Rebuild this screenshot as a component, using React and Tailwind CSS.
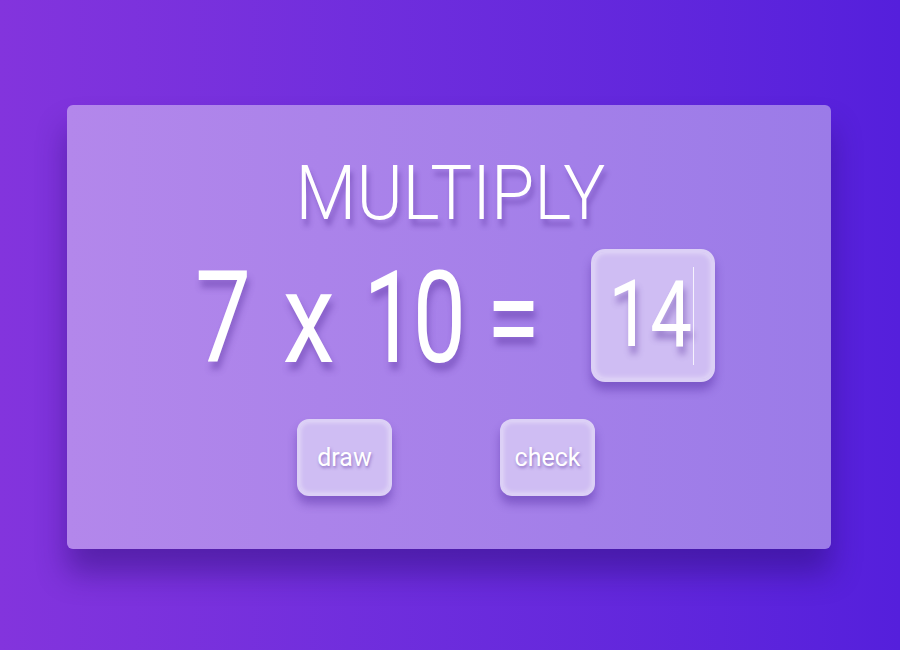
export default function App() {
  return (
    <div className="w-[900px] h-[650px] bg-gradient-to-r from-[#8334dd] to-[#551fdc] flex items-start pt-[105px] pl-[67px] font-['Roboto','Liberation_Sans',sans-serif]">
      <div className="w-[764px] h-[444px] rounded-[6px] bg-gradient-to-r from-[#b387eb] to-[#9b7be8] shadow-[0_24px_30px_rgba(40,10,110,0.45)] flex flex-col items-center">
        <div className="mt-[53px] ml-[2px] h-[70px] flex items-center text-white text-[76px] font-light leading-none [text-shadow:3px_7px_6px_rgba(90,50,160,0.45)]">
          <span className="inline-block scale-x-[0.925]">MULTIPLY</span>
        </div>
        <div className="mt-[21px] ml-[16px] h-[133px] flex items-center gap-[37px] text-white text-[128px] font-normal leading-none [text-shadow:3px_8px_7px_rgba(90,50,160,0.45)]">
          <span className="inline-flex justify-center w-[47px] pt-[4px]"><span className="inline-block scale-x-[0.78]">7</span></span>
          <span className="inline-flex justify-center w-[50px] pt-[4px]"><span className="inline-block scale-x-[0.82]">x</span></span>
          <span className="inline-flex justify-center w-[85px] pt-[4px]"><span className="inline-block scale-x-[0.74] tracking-[-0.04em]">10</span></span>
          <span className="inline-flex justify-center w-[42px] pt-[4px]"><span className="inline-block scale-x-[0.76]">=</span></span>
          <div className="ml-[19px] w-[124px] h-[133px] rounded-[14px] bg-[#cfbdf3] border-[3px] border-[#dcd0f6] shadow-[0_8px_10px_rgba(70,30,150,0.4),inset_0_0_6px_rgba(255,255,255,0.6)] flex items-center relative">
            <span className="absolute left-[20px] top-[26px] w-[74px] h-[72px] inline-flex justify-center items-center text-[93px]">
              <span className="inline-block scale-x-[0.8]">14</span>
            </span>
            <div className="absolute left-[99px] top-[15px] w-px h-[98px] bg-white/80"></div>
          </div>
        </div>
        <div className="mt-[37px] -ml-[6px] flex gap-[108px]">
          <div className="w-[95px] h-[77px] rounded-[12px] bg-[#cfbdf3] border-[3px] border-[#dcd0f6] shadow-[0_8px_10px_rgba(70,30,150,0.4),inset_0_0_5px_rgba(255,255,255,0.5)] flex items-center justify-center text-white text-[25px] font-normal leading-none [text-shadow:1px_2px_3px_rgba(90,50,160,0.5)]">
            draw
          </div>
          <div className="w-[95px] h-[77px] rounded-[12px] bg-[#cfbdf3] border-[3px] border-[#dcd0f6] shadow-[0_8px_10px_rgba(70,30,150,0.4),inset_0_0_5px_rgba(255,255,255,0.5)] flex items-center justify-center text-white text-[25px] font-normal leading-none [text-shadow:1px_2px_3px_rgba(90,50,160,0.5)]">
            check
          </div>
        </div>
      </div>
    </div>
  );
}
